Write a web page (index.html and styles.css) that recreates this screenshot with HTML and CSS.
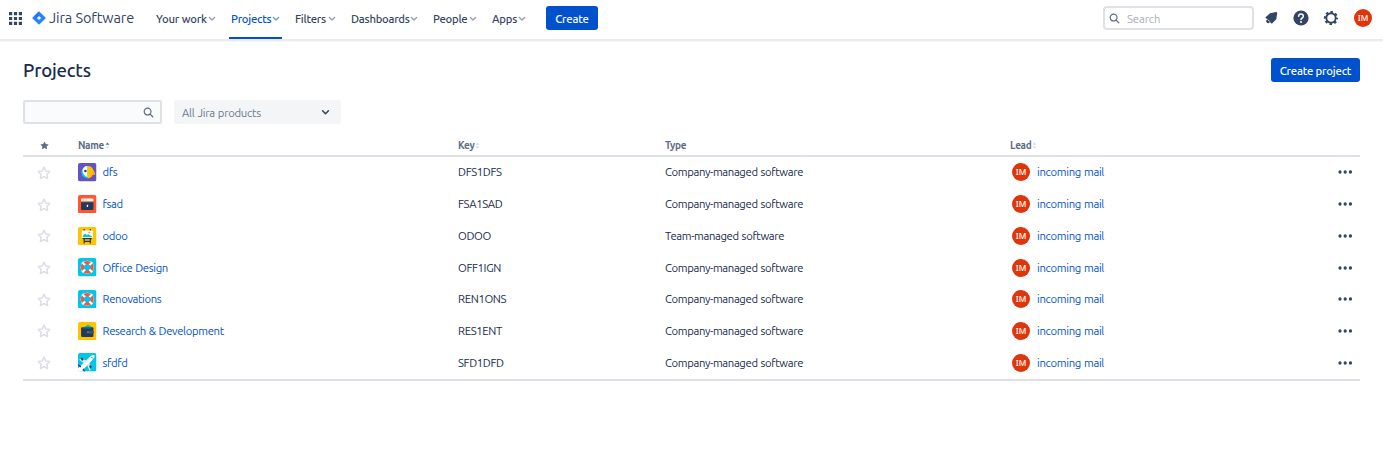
FILE: index.html
```html
<!DOCTYPE html>
<html lang="en">
<head>
<meta charset="utf-8">
<title>Projects - Jira Software</title>
<link rel="stylesheet" href="styles.css">
</head>
<body>
<svg class="defs" width="0" height="0" aria-hidden="true">
  <symbol id="chev" viewBox="0 0 8 6"><path d="M1.4 1.5 4 4.1l2.6-2.6" fill="none" stroke="currentColor" stroke-width="1.4" stroke-linecap="round" stroke-linejoin="round"/></symbol>
  <symbol id="lens" viewBox="0 0 12 12"><circle cx="5" cy="5" r="3.7" fill="none" stroke="currentColor" stroke-width="1.3"/><path d="M7.8 7.8 10.6 10.6" stroke="currentColor" stroke-width="1.4" stroke-linecap="round"/></symbol>
  <symbol id="star" viewBox="0 0 14 14"><path d="M7 1.2 8.8 4.9l4 .6-2.900 2.900.7 4.100L7 10.600l-3.600 1.900.7-4.100L1.200 5.500l4-.6z" fill="none" stroke="#dcdfe5" stroke-width="1.5" stroke-linejoin="round"/></symbol>
  <symbol id="sort" viewBox="0 0 5 8"><path d="M.2 3.200 2.500.5 4.800 3.200z"/><path d="M.2 5 2.500 7.500 4.800 5z" fill="#d5d9e0"/></symbol>
  <symbol id="dots" viewBox="0 0 14 4"><circle cx="2" cy="2" r="1.65"/><circle cx="7.200" cy="2" r="1.65"/><circle cx="12.400" cy="2" r="1.65"/></symbol>
  <symbol id="bird" viewBox="0 0 18 18"><rect width="18" height="18" rx="2" fill="#6554c0"/><path d="M9.300 3a6 6 0 0 0 0 12z" fill="#00c7e6"/><path d="M9.300 3C6.500 3 4.800 4.800 4.500 7 4.300 10.500 6.500 13 9.300 13.500z" fill="#fff"/><path d="M9.300 3c3 0 4.800 1.500 5.500 3.800l1.900 3.200-.7 1.700-1.400-.5c-.9 2.200-2.800 3.800-5.300 3.800z" fill="#ffc400"/><path d="M14.600 8.500l2.100 1.500-.7 1.700-1.600-.6z" fill="#ff991f"/><circle cx="7.200" cy="7.800" r="1.200" fill="#253858"/></symbol>
  <symbol id="browser" viewBox="0 0 18 18"><rect width="18" height="18" rx="2" fill="#ff5630"/><path d="M3 6V4.500Q3 3.500 4 3.500h10q1 0 1 1V6z" fill="#fff"/><path d="M4.600 4.800h1.200M7 4.800h1.200" stroke="#ff8b6b"/><rect x="3" y="6.800" width="12" height="7.700" rx="1" fill="#253858"/><path d="M3 7.400h12" stroke="#42526e" stroke-width=".7"/><path d="M8.500 9.500H10l-.4 2.200h-1z" fill="#fff"/></symbol>
  <symbol id="board" viewBox="0 0 18 18"><rect width="18" height="18" rx="2" fill="#ffc400"/><path d="M6 2v2M12 2v2M6 11v5M12 11v5M6 13.900h6" stroke="#253858" stroke-width="1.200"/><rect x="3.700" y="3.300" width="10.800" height="7.200" rx=".6" fill="#fff"/><path d="M5 9.500V8.500l2-1.600 1.700 1.300 1.300-.8 3.200 1.800v.3z" fill="#00b8d9" stroke="#00b8d9" stroke-width=".6"/><circle cx="11" cy="5.300" r="1" fill="#ff991f"/><path d="M4.500 11.300h9" stroke="#253858" stroke-width="1.200"/></symbol>
  <symbol id="ring" viewBox="0 0 18 18"><rect width="18" height="18" rx="2" fill="#00c7e6"/><path d="M4.200 4.200q4.800-2.500 9.600 0 2.500 4.800 0 9.600-4.800 2.500-9.600 0-2.500-4.800 0-9.600z" fill="none" stroke="#ffebe6" stroke-width=".8"/><circle cx="9" cy="9" r="4.700" fill="none" stroke="#ff4f45" stroke-width="2.900"/><path d="M4.300 4.300 6.900 6.900M13.700 4.300 11.100 6.900M4.300 13.700l2.600-2.600M13.700 13.700l-2.600-2.600" stroke="#fff" stroke-width="2.100"/></symbol>
  <symbol id="wallet" viewBox="0 0 18 18"><rect width="18" height="18" rx="2" fill="#ffc400"/><path d="M5 5.500 10 2.700l3 2.800z" fill="#00b8a3"/><path d="M7 5.500 12.500 3.500l1 2z" fill="#00c7e6"/><rect x="3" y="5" width="12" height="9.700" rx="1" fill="#253858"/><path d="M5 5.800h8" stroke="#0088a3" stroke-width=".9"/><rect x="10.500" y="8.500" width="5" height="3" rx="1.200" fill="#42526e"/><circle cx="9.700" cy="10" r="1" fill="#6b83a5"/></symbol>
  <symbol id="plane" viewBox="0 0 18 18"><rect width="18" height="18" rx="2" fill="#00c7e6"/><path d="M1 6.500 3 5.700l5 1.300-2 3zM9 12l2.500-2 1 4.500-.5 2.500h-1z" fill="#dfe5ee"/><path d="M2.300 5.200 4 4.500l1.600 1.700-1.600 1.500zM10.700 12.500l2-.5.700 1.500-1.500 2z" fill="#344563"/><path d="M0 15 12.200 3.200Q14.500 1.400 16 2 16.600 3.600 14.800 5.800L3.500 18H2Q0 18 0 16z" fill="#fff"/><path d="M0 11.500 2.800 13.500M5 15.500l1.500 2.500" stroke="#344563" stroke-width="1.400"/><path d="m13 3.900 1.300 1.300" stroke="#6b83a5"/></symbol>
</svg>

<header class="topbar">
  <svg class="switcher" viewBox="0 0 13 13" fill="#344563"><path d="M0 0h3.200v3.200H0zM4.900 0h3.200v3.200H4.900zM9.800 0H13v3.200H9.800zM0 4.900h3.200v3.200H0zM4.900 4.900h3.200v3.200H4.900zM9.800 4.900H13v3.200H9.800zM0 9.800h3.200V13H0zM4.900 9.800h3.200V13H4.900zM9.800 9.800H13V13H9.800z"/></svg>
  <svg class="logo" viewBox="0 0 14 14"><path d="M7 .2 13.500 6.500Q14 7 13.500 7.500L7 13.800.5 7.500Q0 7 .5 6.500zM7 4.900 4.900 7 7 9.100 9.100 7z" fill="#2684ff" fill-rule="evenodd"/><path d="M7 .2Q5.500 2.800 7 4.900L4.300 7.600 2 5z" fill="#0f62e6" opacity=".4"/></svg>
  <span class="brand">Jira Software</span>
  <nav class="nav">
    <a class="nav-item work"><span>Your work</span><svg class="chev"><use href="#chev"/></svg></a>
    <a class="nav-item projects active"><span>Projects</span><svg class="chev"><use href="#chev"/></svg></a>
    <a class="nav-item filters"><span>Filters</span><svg class="chev"><use href="#chev"/></svg></a>
    <a class="nav-item dashboards"><span>Dashboards</span><svg class="chev"><use href="#chev"/></svg></a>
    <a class="nav-item people"><span>People</span><svg class="chev"><use href="#chev"/></svg></a>
    <a class="nav-item apps"><span>Apps</span><svg class="chev"><use href="#chev"/></svg></a>
  </nav>
  <button class="btn create">Create</button>
  <div class="search"><svg class="lens"><use href="#lens"/></svg><span>Search</span></div>
  <div class="tools">
    <svg class="tool" viewBox="0 0 16 16" fill="#344563"><path d="M7 3.200 13.200 2Q14.300 2 14.200 3.200L13.300 9.200 8.800 13.800 6.900 11.900Q5.400 14 3.700 12.500L3.500 12.300Q2.500 10.800 4.200 9.200L2.300 7.400z"/><path d="m4.500 9.300 2.300 2.300" stroke="#fff" stroke-width=".8"/></svg>
    <svg class="tool" viewBox="0 0 16 16"><circle cx="8" cy="8" r="7.600" fill="#344563"/><path d="M5.700 6.300Q5.800 4.100 8 4.100T10.300 6.200Q10.300 7.300 9.200 8 8 8.600 8 9.600" fill="none" stroke="#fff" stroke-width="1.500" stroke-linecap="round"/><circle cx="8" cy="11.900" r="1" fill="#fff"/></svg>
    <svg class="tool" viewBox="0 0 16 16" fill="none" stroke="#344563"><circle cx="8" cy="8" r="4.700" stroke-width="1.900"/><circle cx="8" cy="8" r="6.100" stroke-width="2" stroke-dasharray="2.500 2.291" stroke-dashoffset="1.250"/></svg>
  </div>
  <span class="avatar">IM</span>
</header>

<main class="page">
  <div class="title-row"><h1>Projects</h1><button class="btn create-project">Create project</button></div>
  <div class="filter-row">
    <div class="filter-input"><svg class="lens"><use href="#lens"/></svg></div>
    <div class="select"><span>All Jira products</span><svg class="chev"><use href="#chev"/></svg></div>
  </div>
  <section class="table">
    <div class="row head">
      <svg class="head-star" viewBox="0 0 14 14"><path d="M7 .8 9 4.800l4.500.5-3.300 3.100.9 4.500L7 10.800l-4.100 2.100.9-4.500L.5 5.300 5 4.800z" fill="#5e6c84"/></svg>
      <span class="sortable asc">Name<svg><use href="#sort"/></svg></span>
      <span class="sortable">Key<svg><use href="#sort"/></svg></span>
      <span>Type</span>
      <span class="sortable">Lead<svg><use href="#sort"/></svg></span>
    </div>
    <div class="row"><svg class="star"><use href="#star"/></svg><a class="name"><svg><use href="#bird"/></svg><span>dfs</span></a><span class="key">DFS1DFS</span><span class="type">Company-managed software</span><a class="lead"><i class="avatar">IM</i><span>incoming mail</span></a><svg class="dots"><use href="#dots"/></svg></div>
    <div class="row"><svg class="star"><use href="#star"/></svg><a class="name"><svg><use href="#browser"/></svg><span>fsad</span></a><span class="key">FSA1SAD</span><span class="type">Company-managed software</span><a class="lead"><i class="avatar">IM</i><span>incoming mail</span></a><svg class="dots"><use href="#dots"/></svg></div>
    <div class="row"><svg class="star"><use href="#star"/></svg><a class="name"><svg><use href="#board"/></svg><span>odoo</span></a><span class="key">ODOO</span><span class="type">Team-managed software</span><a class="lead"><i class="avatar">IM</i><span>incoming mail</span></a><svg class="dots"><use href="#dots"/></svg></div>
    <div class="row"><svg class="star"><use href="#star"/></svg><a class="name"><svg><use href="#ring"/></svg><span>Office Design</span></a><span class="key">OFF1IGN</span><span class="type">Company-managed software</span><a class="lead"><i class="avatar">IM</i><span>incoming mail</span></a><svg class="dots"><use href="#dots"/></svg></div>
    <div class="row"><svg class="star"><use href="#star"/></svg><a class="name"><svg><use href="#ring"/></svg><span>Renovations</span></a><span class="key">REN1ONS</span><span class="type">Company-managed software</span><a class="lead"><i class="avatar">IM</i><span>incoming mail</span></a><svg class="dots"><use href="#dots"/></svg></div>
    <div class="row"><svg class="star"><use href="#star"/></svg><a class="name"><svg><use href="#wallet"/></svg><span>Research &amp; Development</span></a><span class="key">RES1ENT</span><span class="type">Company-managed software</span><a class="lead"><i class="avatar">IM</i><span>incoming mail</span></a><svg class="dots"><use href="#dots"/></svg></div>
    <div class="row"><svg class="star"><use href="#star"/></svg><a class="name"><svg><use href="#plane"/></svg><span>sfdfd</span></a><span class="key">SFD1DFD</span><span class="type">Company-managed software</span><a class="lead"><i class="avatar">IM</i><span>incoming mail</span></a><svg class="dots"><use href="#dots"/></svg></div>
  </section>
</main>
</body>
</html>
```
FILE: styles.css
```css
* { box-sizing: border-box; }
body {
  margin: 0;
  height: 454px;
  overflow: hidden;
  background: #fff;
  color: #172b4d;
  font-family: Ubuntu, "Noto Sans", "Open Sans", sans-serif;
  font-size: 11.3px;
  line-height: 16px;
  letter-spacing: -0.35px;
  word-spacing: 0.6px;
  white-space: nowrap;
}
svg { display: block; flex: none; }
.defs { position: absolute; }

.topbar {
  display: flex;
  align-items: center;
  height: 42px;
  padding: 0 11px 5px 9px;
  border-bottom: 1px solid #f6f7f8;
  box-shadow: inset 0 -2px #ebecee;
}
.switcher { width: 13px; height: 13px; }
.logo { width: 14px; height: 14px; margin-left: 10px; }
.brand {
  width: 107px;
  margin-left: 3px;
  font-size: 14.5px;
  color: #344563;
  letter-spacing: -0.1px;
  word-spacing: 0;
}
.nav { display: flex; align-self: stretch; gap: 15px; margin-bottom: -2px; }
.nav-item {
  display: flex;
  align-items: center;
  justify-content: space-between;
  height: 39px;
  padding-bottom: 2px;
  color: #344563;
  font-weight: 500;
  letter-spacing: -0.25px;
}
.nav .chev { width: 8px; height: 6px; color: #97a0af; margin-top: 1px; }
.work { width: 60px; }
.projects { width: 49px; }
.filters { width: 41px; }
.dashboards { width: 67px; }
.people { width: 44px; }
.apps { width: 34px; }
.nav-item.active {
  width: 53px;
  margin: 0 -2px;
  padding: 0 2px;
  border-bottom: 2px solid #0052cc;
  color: #0052cc;
}
.nav .active .chev { color: #6b9be0; }
.btn {
  height: 24px;
  padding: 0;
  border: 0;
  border-radius: 3px;
  background: #0052cc;
  color: #fff;
  font: 500 11.3px/16px Ubuntu, "Noto Sans", "Open Sans", sans-serif;
}
.create { width: 52px; margin-left: 20px; padding-top: 1px; letter-spacing: -0.2px; }
.search {
  display: flex;
  align-items: center;
  width: 151px;
  height: 24px;
  margin-left: auto;
  padding: 1px 0 0 5px;
  gap: 7px;
  border: 2px solid #dfe1e6;
  border-radius: 4px;
  color: #a5adba;
  letter-spacing: -0.1px;
}
.lens { width: 11px; height: 11px; color: #5e6c84; }
.search .lens { margin-left: -1px; }
.tools { display: flex; gap: 14px; margin-left: 9px; }
.tool { width: 16px; height: 16px; }
.avatar {
  display: flex;
  align-items: center;
  justify-content: center;
  width: 18px;
  height: 18px;
  border-radius: 50%;
  background: #de350b;
  color: #fff;
  font-family: "Noto Sans", sans-serif;
  font-size: 8.3px;
  font-style: normal;
  font-weight: 500;
  letter-spacing: 0;
}
.topbar > .avatar { margin-left: 15px; }

.page { padding: 16px 23px 0; }
.title-row { display: flex; align-items: center; justify-content: space-between; height: 24px; }
h1 { margin: 0; font-size: 18.5px; line-height: 24px; font-weight: 500; letter-spacing: -0.2px; }
.create-project { width: 89px; padding-top: 1px; letter-spacing: -0.2px; }
.filter-row { display: flex; gap: 12px; margin-top: 18px; }
.filter-input {
  display: flex;
  align-items: center;
  justify-content: flex-end;
  width: 139px;
  height: 24px;
  padding-right: 6px;
  border: 2px solid #dfe1e6;
  border-radius: 2px;
  background: #fafbfc;
}
.select {
  display: flex;
  align-items: center;
  justify-content: space-between;
  width: 167px;
  height: 24px;
  padding: 1px 11px 0 8px;
  border-radius: 3px;
  background: #f4f5f7;
  color: #6b778c;
  letter-spacing: -0.25px;
}
.select .chev { width: 9px; height: 7px; color: #344563; }

.table { margin-top: 12px; border-bottom: 2px solid #dfe1e6; }
.row {
  display: grid;
  grid-template-columns: 55px 380px 207px 345px 328px 22px;
  align-items: center;
  height: 31.7px;
  padding-bottom: 0.8px;
}
.head {
  height: 21px;
  padding-bottom: 0;
  border-bottom: 2px solid #dfe1e6;
  color: #5e6c84;
  font-size: 10px;
  font-weight: 700;
}
.head-star { width: 9px; height: 9px; margin-left: 17px; }
.sortable { display: flex; align-items: center; gap: 1px; }
.sortable svg { width: 5px; height: 7px; fill: #d5d9e0; }
.sortable.asc svg { fill: #5e6c84; }
.star { width: 14px; height: 14px; margin: 1px 0 0 14px; }
.name, .lead { display: flex; align-items: center; gap: 6px; color: #0052cc; }
.name svg { width: 18.5px; height: 18.5px; }
.lead { gap: 7px; padding-left: 2px; letter-spacing: -0.3px; }
.dots { width: 14px; height: 4px; fill: #344563; }
```
